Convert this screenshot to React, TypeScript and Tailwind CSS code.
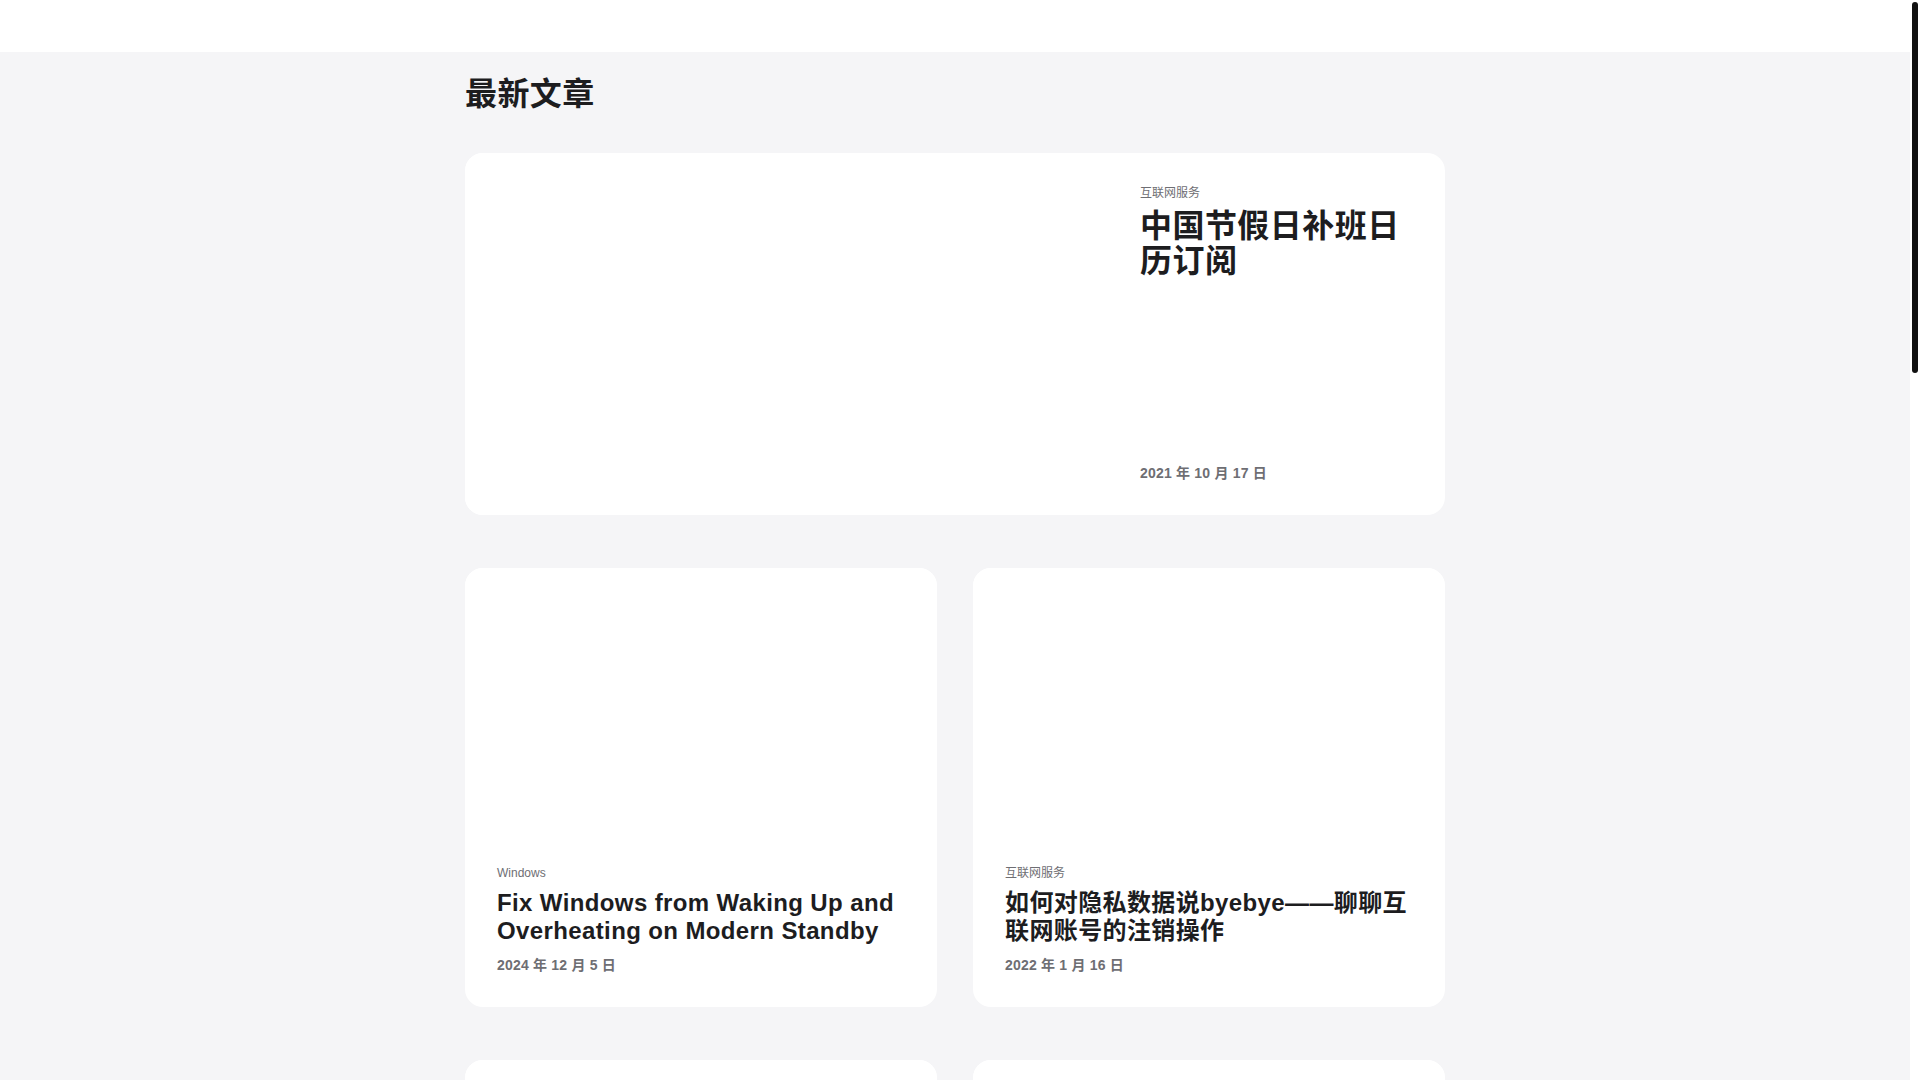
import React from 'react';

type Post = {
  id: string;
  category: string;
  title: string;
  date: string;
};

const featured: Post = {
  id: 'holiday-calendar',
  category: '互联网服务',
  title: '中国节假日补班日历订阅',
  date: '2021 年 10 月 17 日',
};

const posts: Post[] = [
  { id: 'modern-standby', category: 'Windows', title: 'Fix Windows from Waking Up and Overheating on Modern Standby', date: '2024 年 12 月 5 日' },
  { id: 'byebye', category: '互联网服务', title: '如何对隐私数据说byebye——聊聊互联网账号的注销操作', date: '2022 年 1 月 16 日' },
  { id: 'p3', category: 'macOS', title: '整理 macOS 上常用的效率工具', date: '2021 年 8 月 2 日' },
  { id: 'p4', category: '网络', title: '家庭网络折腾记录', date: '2021 年 6 月 20 日' },
  { id: 'p5', category: 'Windows', title: 'Windows 11 初体验', date: '2021 年 6 月 25 日' },
  { id: 'p6', category: '互联网服务', title: '自建 RSS 订阅服务', date: '2021 年 3 月 14 日' },
  { id: 'p7', category: '开发', title: '用 GitHub Actions 自动部署博客', date: '2020 年 12 月 1 日' },
  { id: 'p8', category: '硬件', title: '给旧笔记本换上固态硬盘', date: '2020 年 9 月 9 日' },
  { id: 'p9', category: '网络', title: '配置 IPv6 的一些笔记', date: '2020 年 5 月 18 日' },
  { id: 'p10', category: '开发', title: '从零开始写一个静态站点生成器', date: '2020 年 2 月 3 日' },
];

function PostCard({ post }: { post: Post }) {
  return (
    <a href="#" className="flex flex-col bg-white rounded-[18px] overflow-hidden">
      {/* Cover */}
      <div className="aspect-video w-full bg-white" />
      <div className="flex flex-col flex-1 px-8 pt-8 pb-8">
        <span className="text-[12px] leading-[16px] text-[#6e6e73]">{post.category}</span>
        <h3 className="mt-2 text-[24px] leading-[28px] font-bold tracking-[0.38px] text-[#1d1d1f]">{post.title}</h3>
        <span className="mt-[10px] text-[14px] leading-[20px] font-bold tracking-[0.2px] text-[#6e6e73]">{post.date}</span>
      </div>
    </a>
  );
}

export default function App() {
  return (
    <div className="flex h-screen w-full font-['Liberation_Sans','Noto_Sans_CJK_SC',sans-serif]">
      {/* Page */}
      <div className="flex-1 overflow-y-auto bg-[#f5f5f7]">
        <header className="h-[52px] w-full bg-white" />

        <main className="mx-auto w-[980px] pt-6 pb-[126px]">
          <h2 className="text-[32px] leading-[36px] font-bold tracking-[0.4px] text-[#1d1d1f]">最新文章</h2>

          <div className="mt-[41px] flex flex-col gap-[53px]">
            {/* Featured */}
            <a href="#" className="flex bg-white rounded-[18px] overflow-hidden">
              <div className="w-[643px] aspect-video shrink-0 bg-white" />
              <div className="flex flex-1 flex-col justify-between ml-8 pr-8 pt-8 pb-8">
                <div className="flex flex-col">
                  <span className="text-[12px] leading-[16px] text-[#6e6e73]">{featured.category}</span>
                  <h3 className="mt-2 text-[32px] leading-[35px] font-bold tracking-[0.45px] text-[#1d1d1f]">{featured.title}</h3>
                </div>
                <span className="text-[14px] leading-[20px] font-bold tracking-[0.2px] text-[#6e6e73]">{featured.date}</span>
              </div>
            </a>

            <div className="grid grid-cols-2 gap-x-9 gap-y-[53px]">
              {posts.map((post) => (
                <PostCard key={post.id} post={post} />
              ))}
            </div>
          </div>
        </main>
      </div>

      {/* Scrollbar */}
      <aside className="w-[10px] shrink-0 bg-white pt-[2px]">
        <div className="mx-auto h-[371px] w-[6px] rounded-full bg-[#111111]" />
      </aside>
    </div>
  );
}
